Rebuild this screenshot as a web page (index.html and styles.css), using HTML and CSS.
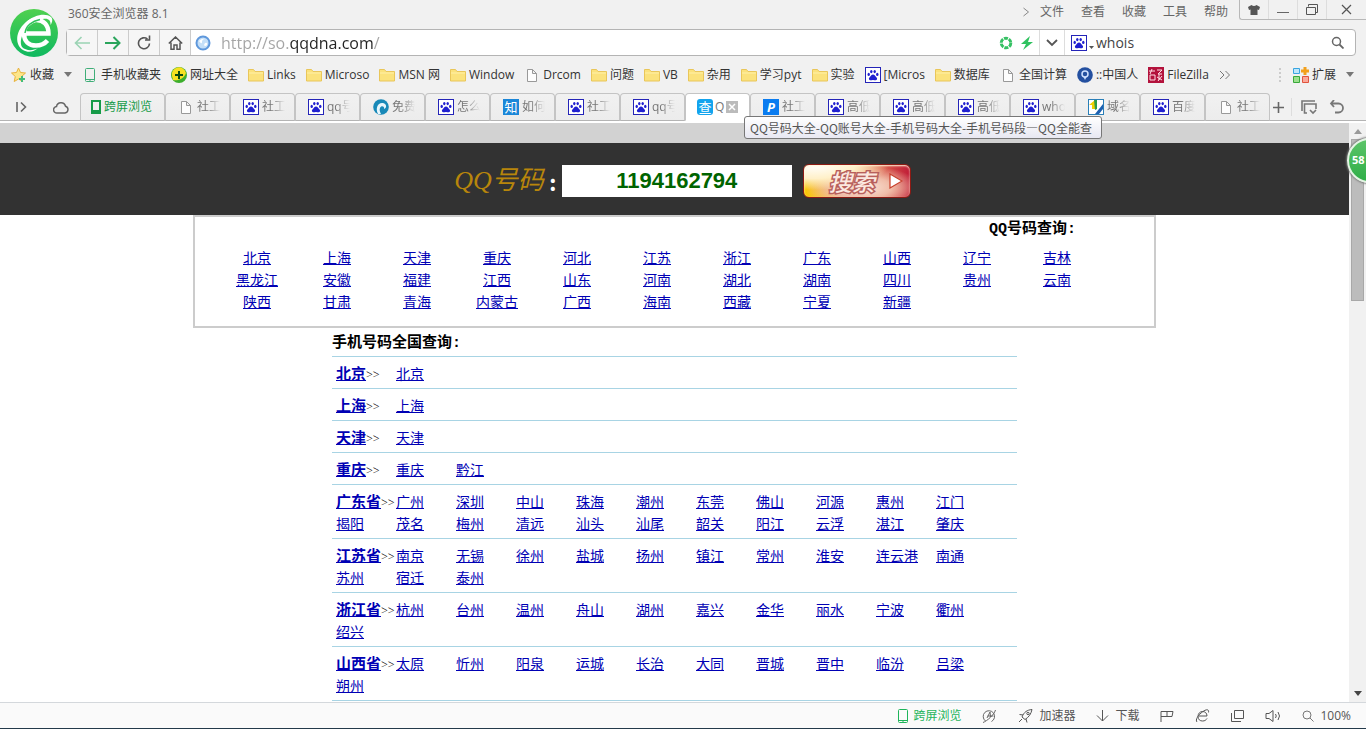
FILE: index.html
```html
<!DOCTYPE HTML>
<html lang="zh-CN">

<head>
	<meta charset="utf-8">
	<title>QQ号码大全</title>
	<link rel="stylesheet" href="styles.css">
</head>

<body>

	<!-- shared icons -->
	<svg class="sprite" aria-hidden="true">
		<symbol id="paw" viewBox="0 0 16 16">
			<rect x=".5" y=".5" width="15" height="15" fill="#fff" stroke="#2424b8"/>
			<g fill="#2020d0">
				<ellipse cx="3.700" cy="7.400" rx="1.200" ry="1.600"/>
				<ellipse cx="6.300" cy="4.600" rx="1.200" ry="1.700"/>
				<ellipse cx="9.700" cy="4.600" rx="1.200" ry="1.700"/>
				<ellipse cx="12.300" cy="7.400" rx="1.200" ry="1.600"/>
				<path d="M8 7.500c1.500 0 2 1.300 2.900 2.200 1 .9 1.400 1.700 1.100 2.600-.4 1.200-1.700 1.100-2.600.9a6 6 0 0 0-2.800 0c-.9.2-2.200.3-2.600-.9-.3-.9.100-1.700 1.100-2.600C6 8.800 6.500 7.500 8 7.500z"/>
			</g>
		</symbol>
		<symbol id="folder" viewBox="0 0 16 16">
			<path d="M.5 2.500h5l1.500 2h8.500v9.500H.5z" fill="#fbe27c" stroke="#e9c65a"/>
			<path d="M1 6h14" stroke="#fff0a8"/>
		</symbol>
		<symbol id="page" viewBox="0 0 16 16">
			<path d="M3.500 2.500h5l4 4v8h-9zM8.500 2.500v4h4" fill="#fdfdfd" stroke="#999"/>
		</symbol>
		<symbol id="phone" viewBox="0 0 16 16">
			<rect x="3.500" y="1.500" width="9" height="13" rx="1" fill="none" stroke="currentColor"/>
			<path d="M3 12.500h10M7 14h2" stroke="currentColor"/>
		</symbol>
	</svg>

	<header class="chrome">
		<div class="head">
			<svg class="logo" viewBox="0 0 48 48" aria-label="360">
				<defs>
					<linearGradient id="lg" x1="0" y1="0" x2="0" y2="1">
						<stop offset="0" stop-color="#4fd04f"/>
						<stop offset="1" stop-color="#0fb860"/>
					</linearGradient>
				</defs>
				<circle cx="24" cy="24" r="24" fill="url(#lg)"/>
				<path d="M16 24.500h22.500C38.500 16 33.500 11 26.500 11S14 16.500 14 24.500 19 36.500 26 36.500c5 0 8.500-1.500 11.500-5" fill="none" stroke="#fff" stroke-width="4.500"/>
				<path d="M13 41C5 36 5 23 15 14S36 4 41 8c2 2 1.500 5-.5 8 .5-6-4-8-12-4.500C15 17 8 30 12 38c4 4 11 4 16 1-4 4-10 5-15 2z" fill="#fff"/>
				<path d="M15 24C16 17 22 12 30 10.500" stroke="#2ec45a" fill="none" stroke-width="1.500"/>
			</svg>

			<div class="title-row">
				<span class="app-name">360安全浏览器 8.1</span>
				<nav class="menu">
					<svg width="8" height="12" viewBox="0 0 8 12"><path d="M1.500 2l5 4-5 4" fill="none" stroke="#888"/></svg>
					<a href="#">文件</a>
					<a href="#">查看</a>
					<a href="#">收藏</a>
					<a href="#">工具</a>
					<a href="#">帮助</a>
				</nav>
				<div class="window-buttons">
					<button aria-label="皮肤"><svg width="12" height="10" viewBox="0 0 12 10"><path d="M3.500 0Q6 2 8.500 0L12 2l-1 3-1.500-.5V10h-7V4.500L1 5 0 2z" fill="#555"/></svg></button>
					<button aria-label="最小化"><svg width="12" height="10" viewBox="0 0 12 10"><path d="M0 7.500h12" stroke="#666"/></svg></button>
					<button aria-label="还原"><svg width="12" height="11" viewBox="0 0 12 11"><path d="M2.500 2.500v-2h9v8h-2M.5 3.500h9v7h-9z" fill="none" stroke="#555"/></svg></button>
					<button aria-label="关闭"><svg width="11" height="11" viewBox="0 0 11 11"><path d="M1 1l9 9M10 1l-9 9" stroke="#555" stroke-width="1.200"/></svg></button>
				</div>
			</div>

			<div class="toolbar">
				<button class="nav-button" aria-label="后退"><svg width="16" height="14" viewBox="0 0 16 14"><path d="M16 7H2M7.500 1L1.500 7l6 6" fill="none" stroke="#9bd3b4" stroke-width="1.600"/></svg></button>
				<button class="nav-button" aria-label="前进"><svg width="16" height="14" viewBox="0 0 16 14"><path d="M0 7h14M8.500 1l6 6-6 6" fill="none" stroke="#2aa55c" stroke-width="2"/></svg></button>
				<button class="nav-button" aria-label="刷新"><svg width="14" height="15" viewBox="0 0 14 15"><path d="M12.500 8.500A5.500 5.500 0 1 1 10.500 4M8 5h4.500V.5" fill="none" stroke="#555" stroke-width="1.600"/></svg></button>
				<button class="nav-button" aria-label="主页"><svg width="15" height="14" viewBox="0 0 15 14"><path d="M.8 7.500L7.500 1l6.700 6.500M3 6.500v6.700h3V9h3v4.200h3V6.500" fill="none" stroke="#555" stroke-width="1.500"/></svg></button>
				<label class="address">
					<svg width="16" height="16" viewBox="0 0 16 16"><circle cx="8" cy="8" r="6.500" fill="#c4dff8" stroke="#5f98dc" stroke-width="2"/><path d="M4 6q3-3 6-2-3 0-3 3t-3-1zM10 8q3-1 2 2-2 2-3 0z" fill="#fff"/></svg>
					<input class="url" type="text" value="http://so.qqdna.com/" aria-label="地址">
				</label>
				<div class="flags">
					<svg width="14" height="14" viewBox="0 0 14 14"><circle cx="7" cy="7" r="4.800" fill="none" stroke="#35c163" stroke-width="3" stroke-dasharray="4 1"/></svg>
					<svg width="12" height="14" viewBox="0 0 12 14"><path d="M9 0L0 8h5l-3 6 10-8H7z" fill="#2fc25f"/></svg>
				</div>
				<button class="nav-button drop" aria-label="展开"><svg width="12" height="8" viewBox="0 0 12 8"><path d="M1 1l5 5 5-5" fill="none" stroke="#555" stroke-width="1.800"/></svg></button>
				<label class="quick-search">
					<svg width="16" height="16"><use href="#paw"/></svg>
					<svg class="tiny" width="5" height="3" viewBox="0 0 5 3"><path d="M0 0h5L2.500 3z" fill="#555"/></svg>
					<input type="text" value="whois" aria-label="搜索">
					<svg width="13" height="13" viewBox="0 0 13 13"><circle cx="5.500" cy="5.500" r="4" fill="none" stroke="#666" stroke-width="1.500"/><path d="M8.500 8.500l4 4" stroke="#666" stroke-width="1.800"/></svg>
				</label>
			</div>
		</div>

		<nav class="bookmarks">
			<a href="#" class="fav"><svg viewBox="0 0 16 16"><path d="M7.500 1l2 4.500 5 .5-4 3.500 1.200 5-4.200-2.500L3.200 14.500l1.100-5L.5 6l5-.5z" fill="#fde68a" stroke="#e8b23c"/><path d="M11 9v6M8 12h6" stroke="#45bd78" stroke-width="2"/></svg>收藏</a>
			<svg class="caret" viewBox="0 0 8 5"><path d="M0 0h8L4 5z" fill="#777"/></svg>
			<a href="#" class="green-icon"><svg><use href="#phone"/></svg>手机收藏夹</a>
			<a href="#"><svg viewBox="0 0 16 16"><circle cx="8" cy="8" r="8" fill="#3cae2c"/><path d="M1 9a7 7 0 0 1 14-3c-2 6-8 8-13 7z" fill="#f7e020"/><path d="M8 4v8M4 8h8" stroke="#0c4a10" stroke-width="2"/></svg>网址大全</a>
			<a href="#"><svg><use href="#folder"/></svg>Links</a>
			<a href="#"><svg><use href="#folder"/></svg>Microso</a>
			<a href="#"><svg><use href="#folder"/></svg>MSN 网</a>
			<a href="#"><svg><use href="#folder"/></svg>Window</a>
			<a href="#"><svg><use href="#page"/></svg>Drcom</a>
			<a href="#"><svg><use href="#folder"/></svg>问题</a>
			<a href="#"><svg><use href="#folder"/></svg>VB</a>
			<a href="#"><svg><use href="#folder"/></svg>杂用</a>
			<a href="#"><svg><use href="#folder"/></svg>学习pyt</a>
			<a href="#"><svg><use href="#folder"/></svg>实验</a>
			<a href="#"><svg><use href="#paw"/></svg>[Micros</a>
			<a href="#"><svg><use href="#folder"/></svg>数据库</a>
			<a href="#"><svg><use href="#page"/></svg>全国计算</a>
			<a href="#"><svg viewBox="0 0 16 16"><circle cx="8" cy="8" r="7.800" fill="#2450a0"/><circle cx="8" cy="7" r="3" fill="none" stroke="#cfe0ff" stroke-width="1.500"/><path d="M6.500 10L8 13l1.500-3z" fill="#cfe0ff"/></svg>::中国人</a>
			<a href="#"><svg viewBox="0 0 16 16"><rect width="16" height="16" fill="#b3123c"/><path d="M1 4h6M4 2l-2 5M2 8h5v5H2zM9 3h5l-4 4h4M11 7v6M9 10l5 3M14 9l-4 5" fill="none" stroke="#ffe0e6"/></svg>FileZilla</a>
			<svg class="more" viewBox="0 0 12 10"><path d="M1 1l4 4-4 4M6.500 1l4 4-4 4" fill="none" stroke="#777"/></svg>
			<span class="dots"></span>
			<a href="#" class="extend"><svg viewBox="0 0 16 16"><path d="M.5 1.500h6v5h-6z" fill="#bfe6fb" stroke="#39a5e0"/><path d="M.5 9.500h6v6h-6z" fill="#9ce08e" stroke="#3aa93c"/><path d="M9.500 9.500h6v6h-6z" fill="#fba89a" stroke="#e0543e"/><path d="M12 0v8M8 4h8" stroke="#f2a01c" stroke-width="3"/></svg>扩展</a>
			<svg class="caret" viewBox="0 0 8 5"><path d="M0 0h8L4 5z" fill="#777"/></svg>
		</nav>

		<nav class="tabs">
			<div class="tab-tools">
				<svg width="12" height="12" viewBox="0 0 12 12"><path d="M1 1v10M5 1.500L9.500 6 5 10.500" fill="none" stroke="#666" stroke-width="1.600"/></svg>
				<svg width="16" height="13" viewBox="0 0 16 13"><path d="M4 12a3.200 3.200 0 0 1-.5-6.400 4.600 4.600 0 0 1 9-.4A3.500 3.500 0 0 1 12 12z" fill="none" stroke="#666" stroke-width="1.500"/></svg>
			</div>
			<a href="#" class="tab cross"><svg viewBox="0 0 16 16"><path d="M4 2h8v12H4z" fill="none" stroke="#169b48" stroke-width="2"/><path d="M4 12h8" stroke="#169b48" stroke-width="2"/></svg><span>跨屏浏览</span></a>
			<a href="#" class="tab"><svg><use href="#page"/></svg><span>社工</span></a>
			<a href="#" class="tab"><svg><use href="#paw"/></svg><span>社工</span></a>
			<a href="#" class="tab"><svg><use href="#paw"/></svg><span>qq号</span></a>
			<a href="#" class="tab"><svg viewBox="0 0 16 16"><circle cx="8" cy="8" r="7.800" fill="#1889b8"/><path d="M5 15C2 9 5 3 10 4c4 1 4 5 1 6 1-3-3-4-4-1-.8 2 0 4 1 6z" fill="#e8f6fc"/></svg><span>免费</span></a>
			<a href="#" class="tab"><svg><use href="#paw"/></svg><span>怎么</span></a>
			<a href="#" class="tab"><b class="badge">知</b><span>如何</span></a>
			<a href="#" class="tab"><svg><use href="#paw"/></svg><span>社工</span></a>
			<a href="#" class="tab"><svg><use href="#paw"/></svg><span>qq号</span></a>
			<a href="#" class="tab active"><b class="badge round">查</b><span>Q</span><button aria-label="关闭标签"><svg viewBox="0 0 12 12"><path d="M3 3l6 6M9 3l-6 6" stroke="#fff" stroke-width="1.500"/></svg></button></a>
			<a href="#" class="tab"><b class="badge slanted">P</b><span>社工</span></a>
			<a href="#" class="tab"><svg><use href="#paw"/></svg><span>高低</span></a>
			<a href="#" class="tab"><svg><use href="#paw"/></svg><span>高低</span></a>
			<a href="#" class="tab"><svg><use href="#paw"/></svg><span>高低</span></a>
			<a href="#" class="tab"><svg><use href="#paw"/></svg><span>who</span></a>
			<a href="#" class="tab"><svg viewBox="0 0 16 16"><rect x=".5" y=".5" width="15" height="15" fill="#fff" stroke="#2a7fb8"/><path d="M1 6l6-5v9H4V6z" fill="#f0d000"/><path d="M6 1h3v9l-2 1z" fill="#2f9b4a"/><path d="M7 15l8-10v5l-4 5z" fill="#1c5fb0"/></svg><span>域名</span></a>
			<a href="#" class="tab"><svg><use href="#paw"/></svg><span>百度</span></a>
			<a href="#" class="tab"><svg><use href="#page"/></svg><span>社工</span></a>
			<div class="tab-actions">
				<button aria-label="新标签"><svg width="11" height="11" viewBox="0 0 11 11"><path d="M5.500 0v11M0 5.500h11" stroke="#666" stroke-width="1.600"/></svg></button>
				<button aria-label="标签列表"><svg width="17" height="15" viewBox="0 0 17 15"><path d="M2 11V1h13M7 13H4.500V4H16v5M10 10l3 3 3-3" fill="none" stroke="#777" stroke-width="1.600"/></svg></button>
				<button aria-label="撤销"><svg width="16" height="14" viewBox="0 0 16 14"><path d="M5 0L2 3.500 5 7M2 3.500h7.500a4.500 4.500 0 0 1 0 9H6" fill="none" stroke="#777" stroke-width="1.800"/></svg></button>
			</div>
		</nav>
	</header>

	<div class="tooltip" role="tooltip">QQ号码大全-QQ账号大全-手机号码大全-手机号码段—QQ全能查</div>

	<div class="viewport">
		<main class="page">
			<div class="strip"></div>
			<form class="search">
				<label for="qq"><i>QQ号码</i></label>
				<b>:</b>
				<input id="qq" type="text" value="1194162794">
				<button type="button"><span>搜索</span><svg width="14" height="16" viewBox="0 0 14 16"><path d="M1 1l12 7-12 7z" fill="#fff" stroke="#c8402c" stroke-width="1.200"/></svg></button>
			</form>

			<section class="provinces">
				<h2>QQ号码查询:</h2>
				<ul>
					<li><a href="#">北京</a></li>
					<li><a href="#">上海</a></li>
					<li><a href="#">天津</a></li>
					<li><a href="#">重庆</a></li>
					<li><a href="#">河北</a></li>
					<li><a href="#">江苏</a></li>
					<li><a href="#">浙江</a></li>
					<li><a href="#">广东</a></li>
					<li><a href="#">山西</a></li>
					<li><a href="#">辽宁</a></li>
					<li><a href="#">吉林</a></li>
					<li><a href="#">黑龙江</a></li>
					<li><a href="#">安徽</a></li>
					<li><a href="#">福建</a></li>
					<li><a href="#">江西</a></li>
					<li><a href="#">山东</a></li>
					<li><a href="#">河南</a></li>
					<li><a href="#">湖北</a></li>
					<li><a href="#">湖南</a></li>
					<li><a href="#">四川</a></li>
					<li><a href="#">贵州</a></li>
					<li><a href="#">云南</a></li>
					<li><a href="#">陕西</a></li>
					<li><a href="#">甘肃</a></li>
					<li><a href="#">青海</a></li>
					<li><a href="#">内蒙古</a></li>
					<li><a href="#">广西</a></li>
					<li><a href="#">海南</a></li>
					<li><a href="#">西藏</a></li>
					<li><a href="#">宁夏</a></li>
					<li><a href="#">新疆</a></li>
				</ul>
			</section>

			<section class="cities">
				<h2>手机号码全国查询:</h2>
				<ul>
					<li><a href="#"><strong>北京</strong></a>&gt;&gt;</li>
					<li><a href="#">北京</a></li>
				</ul>
				<ul>
					<li><a href="#"><strong>上海</strong></a>&gt;&gt;</li>
					<li><a href="#">上海</a></li>
				</ul>
				<ul>
					<li><a href="#"><strong>天津</strong></a>&gt;&gt;</li>
					<li><a href="#">天津</a></li>
				</ul>
				<ul>
					<li><a href="#"><strong>重庆</strong></a>&gt;&gt;</li>
					<li><a href="#">重庆</a></li>
					<li><a href="#">黔江</a></li>
				</ul>
				<ul>
					<li><a href="#"><strong>广东省</strong></a>&gt;&gt;</li>
					<li><a href="#">广州</a></li>
					<li><a href="#">深圳</a></li>
					<li><a href="#">中山</a></li>
					<li><a href="#">珠海</a></li>
					<li><a href="#">潮州</a></li>
					<li><a href="#">东莞</a></li>
					<li><a href="#">佛山</a></li>
					<li><a href="#">河源</a></li>
					<li><a href="#">惠州</a></li>
					<li><a href="#">江门</a></li>
					<li><a href="#">揭阳</a></li>
					<li><a href="#">茂名</a></li>
					<li><a href="#">梅州</a></li>
					<li><a href="#">清远</a></li>
					<li><a href="#">汕头</a></li>
					<li><a href="#">汕尾</a></li>
					<li><a href="#">韶关</a></li>
					<li><a href="#">阳江</a></li>
					<li><a href="#">云浮</a></li>
					<li><a href="#">湛江</a></li>
					<li><a href="#">肇庆</a></li>
				</ul>
				<ul>
					<li><a href="#"><strong>江苏省</strong></a>&gt;&gt;</li>
					<li><a href="#">南京</a></li>
					<li><a href="#">无锡</a></li>
					<li><a href="#">徐州</a></li>
					<li><a href="#">盐城</a></li>
					<li><a href="#">扬州</a></li>
					<li><a href="#">镇江</a></li>
					<li><a href="#">常州</a></li>
					<li><a href="#">淮安</a></li>
					<li><a href="#">连云港</a></li>
					<li><a href="#">南通</a></li>
					<li><a href="#">苏州</a></li>
					<li><a href="#">宿迁</a></li>
					<li><a href="#">泰州</a></li>
				</ul>
				<ul>
					<li><a href="#"><strong>浙江省</strong></a>&gt;&gt;</li>
					<li><a href="#">杭州</a></li>
					<li><a href="#">台州</a></li>
					<li><a href="#">温州</a></li>
					<li><a href="#">舟山</a></li>
					<li><a href="#">湖州</a></li>
					<li><a href="#">嘉兴</a></li>
					<li><a href="#">金华</a></li>
					<li><a href="#">丽水</a></li>
					<li><a href="#">宁波</a></li>
					<li><a href="#">衢州</a></li>
					<li><a href="#">绍兴</a></li>
				</ul>
				<ul>
					<li><a href="#"><strong>山西省</strong></a>&gt;&gt;</li>
					<li><a href="#">太原</a></li>
					<li><a href="#">忻州</a></li>
					<li><a href="#">阳泉</a></li>
					<li><a href="#">运城</a></li>
					<li><a href="#">长治</a></li>
					<li><a href="#">大同</a></li>
					<li><a href="#">晋城</a></li>
					<li><a href="#">晋中</a></li>
					<li><a href="#">临汾</a></li>
					<li><a href="#">吕梁</a></li>
					<li><a href="#">朔州</a></li>
				</ul>
			</section>
		</main>

		<div class="scrollbar">
			<svg viewBox="0 0 8 5"><path d="M0 5h8L4 0z" fill="#999"/></svg>
			<div class="thumb"></div>
			<svg viewBox="0 0 8 5"><path d="M0 0h8L4 5z" fill="#444"/></svg>
		</div>
	</div>

	<div class="speed-ball">58</div>

	<footer class="status">
		<a href="#" class="green"><svg width="16" height="16"><use href="#phone"/></svg>跨屏浏览</a>
		<a href="#"><svg width="15" height="14" viewBox="0 0 15 14"><path d="M3.500 12a5.700 5.700 0 1 1 6 .5M1 13.500C5 12 12 6 13.500 1M5 9l3-6 .5 5M5.500 7h6" fill="none" stroke="#666"/></svg></a>
		<a href="#"><svg width="15" height="14" viewBox="0 0 15 14"><path d="M4 8C6 3 9 1 14 .5 13 5 11 8 7 10.500zM5 6L1.500 5.500M8 10l1 3.500M4 10l-3 3" fill="none" stroke="#555"/><circle cx="10" cy="4.500" r="1.200" fill="none" stroke="#555"/></svg>加速器</a>
		<a href="#"><svg width="13" height="12" viewBox="0 0 13 12"><path d="M6.500 0v11M1 5.500l5.500 5.500L12 5.500" fill="none" stroke="#555"/></svg>下载</a>
		<a href="#"><svg width="14" height="12" viewBox="0 0 14 12"><path d="M1 12V1.500h12l-1 5H1M7 1.500v5" fill="none" stroke="#555"/></svg></a>
		<a href="#"><svg width="15" height="14" viewBox="0 0 15 14"><path d="M4 7h8c0-3-2-4.500-4.500-4.500S3 4.500 3 7.500 5 12 7.500 12s3.500-1 4.500-2.500M2 13C0 11 3 6 8 2.500s6-1 5.500 1" fill="none" stroke="#555"/></svg></a>
		<a href="#"><svg width="13" height="12" viewBox="0 0 13 12"><path d="M3.500.5h9v8h-9zM.5 3v8.500H10" fill="none" stroke="#555"/></svg></a>
		<a href="#"><svg width="16" height="12" viewBox="0 0 16 12"><path d="M1 3.500h3L8 .5v11L4 8.500H1zM10.500 4q1.500 2 0 4M13 2q3 4 0 8" fill="none" stroke="#555"/></svg></a>
		<a href="#"><svg width="12" height="12" viewBox="0 0 12 12"><circle cx="5" cy="5" r="4" fill="none" stroke="#777"/><path d="M8 8l3.500 3.500" stroke="#777"/></svg>100%</a>
	</footer>

</body>

</html>
```
FILE: styles.css
```css
* {
	box-sizing: border-box;
}

body {
	margin: 0;
	height: 100vh;
	display: flex;
	flex-direction: column;
	overflow: hidden;
	position: relative;
	background: #fff;
	font: 12px/16px "Open Sans", "Noto Sans CJK SC", sans-serif;
	color: #444;
}

a {
	color: inherit;
	text-decoration: none;
}

button {
	border: 0;
	padding: 0;
	background: none;
	font: inherit;
	display: flex;
	align-items: center;
	justify-content: center;
}

input {
	border: 0;
	padding: 0;
	outline: 0;
	min-width: 0;
	background: none;
	font: inherit;
}

svg {
	flex: none;
}

ul {
	list-style: none;
	margin: 0;
	padding: 0;
}

.sprite {
	position: absolute;
	width: 0;
	height: 0;
}

/* browser window */
.chrome {
	background: #f1f1f1;
	flex: none;
}

.head {
	display: grid;
	grid-template-columns: 56px 1fr;
	grid-template-rows: 29px 27px;
	padding-left: 10px;
}

.logo {
	width: 48px;
	height: 48px;
	grid-row: 1 / 3;
	align-self: center;
	margin-top: 10px;
}

.title-row {
	display: flex;
	align-items: flex-start;
}

.app-name {
	flex: 1;
	padding: 6px 2px;
	color: #666;
}

.menu {
	display: flex;
	align-items: center;
	gap: 17px;
	padding: 4px 11px 0 0;
	color: #666;
}

.menu svg {
	margin-right: -7px;
}

.window-buttons {
	display: flex;
	height: 20px;
	border: 1px solid #b8b8b8;
	border-width: 0 0 1px 1px;
	border-radius: 0 0 0 3px;
}

.window-buttons button {
	width: 29px;
	border-right: 1px solid #ddd;
}

.window-buttons button:last-child {
	width: 39px;
	border: 0;
}

.toolbar {
	display: flex;
	margin-right: 10px;
	background: #fff;
	border: 1px solid #b4b4b4;
	border-radius: 4px;
}

.nav-button {
	width: 31px;
	background: #f6f6f6;
	border-right: 1px solid #ccc;
}

.drop {
	width: 26px;
	background: #fff;
	border-left: 1px solid #ddd;
	border-right-color: #ddd;
}

.address {
	flex: 1;
	display: flex;
	align-items: center;
	gap: 10px;
	padding-left: 4px;
	font-size: 16px;
}

/* the host is darker than the rest of the address */
.url {
	flex: 1;
	color: transparent;
	background: linear-gradient(to right, #a4a4a4 68px, #222 68px, #222 152px, #a4a4a4 152px);
	-webkit-background-clip: text;
	background-clip: text;
}

.flags {
	display: flex;
	align-items: center;
	gap: 8px;
	padding-right: 6px;
}

.quick-search {
	width: 290px;
	display: flex;
	align-items: center;
	padding: 0 11px 0 6px;
	font-size: 14px;
}

.quick-search input {
	flex: 1;
	color: #444;
}

.tiny {
	margin: 10px 2px 0;
}

.bookmarks {
	display: flex;
	align-items: center;
	gap: 10px;
	height: 37px;
	padding: 0 12px 0 11px;
	white-space: nowrap;
	color: #333;
}

.bookmarks a {
	display: flex;
	align-items: center;
	gap: 3px;
}

.bookmarks a svg {
	width: 16px;
	height: 16px;
}

.bookmarks .caret {
	width: 8px;
	height: 5px;
}

.bookmarks .more {
	width: 12px;
	height: 10px;
}

.bookmarks .green-icon svg {
	color: #3fae78;
}

.dots {
	height: 14px;
	border-left: 2px dotted #ccc;
	margin-left: auto;
	margin-right: 2px;
}

.tabs {
	display: flex;
	height: 30px;
	border-bottom: 2px solid #fff;
	box-shadow: inset 0 -1px #b4b4b4;
}

.tab-tools {
	width: 80px;
	display: flex;
	align-items: center;
	justify-content: space-between;
	padding: 0 11px 0 16px;
}

.tab {
	flex: 0 1 65px;
	min-width: 0;
	display: flex;
	align-items: center;
	gap: 3px;
	padding-left: 12px;
	border: 1px solid #c4c4c4;
	border-bottom-color: #b4b4b4;
	border-radius: 4px 4px 0 0;
	background: linear-gradient(#f1f1f1, #ececec);
	white-space: nowrap;
	color: #777;
}

.tab > svg {
	width: 16px;
	height: 16px;
}

/* long titles fade out */
.tab span {
	-webkit-mask-image: linear-gradient(to right, #000 9px, transparent 23px);
	mask-image: linear-gradient(to right, #000 9px, transparent 23px);
}

.tab.cross {
	flex: none;
	width: 85px;
	padding-left: 7px;
	gap: 0;
	color: #169b48;
}

.tab.cross span,
.tab.active span {
	-webkit-mask-image: none;
	mask-image: none;
}

.tab.active {
	background: #fff;
	border-bottom-color: #fff;
	gap: 2px;
	padding-left: 11px;
}

.active button {
	width: 12px;
	height: 12px;
	background: #bbb;
}

.badge {
	width: 16px;
	height: 16px;
	background: #1a86d8;
	color: #fff;
	font-size: 13px;
	text-align: center;
	font-weight: normal;
}

.round {
	background: #12a4ee;
	border-radius: 3px;
}

.slanted {
	background: #0a7cf0;
	font-weight: bold;
	font-style: italic;
}

.tab-actions {
	display: flex;
	align-items: center;
	gap: 12px;
	padding-left: 3px;
}

.tab-actions button:first-child {
	height: 18px;
	padding-right: 7px;
	border-right: 1px solid #ddd;
	margin-right: -4px;
}

.tooltip {
	position: absolute;
	left: 744px;
	top: 116px;
	z-index: 2;
	padding: 2px 9px 2px 5px;
	background: linear-gradient(#fff, #e8e8f2);
	border: 1px solid #777;
	border-radius: 3px;
	font-family: "Noto Sans CJK SC", sans-serif;
	line-height: 17px;
	white-space: nowrap;
	color: #555;
}

/* web page */
.viewport {
	flex: 1;
	min-height: 0;
	display: flex;
}

.page {
	flex: 1;
	overflow: hidden;
	font: 14px/22px "Noto Sans CJK SC", sans-serif;
	color: #000;
}

.strip {
	height: 20px;
	background: #d2d2d2;
}

.search {
	height: 72px;
	display: flex;
	align-items: center;
	justify-content: center;
	padding: 4px 0 0 16px;
	background: #323232;
}

.search label {
	font: 26px/32px "Liberation Serif", "Noto Sans CJK SC", serif;
	color: #b8860b;
}

.search b {
	width: 18px;
	text-align: center;
	font-size: 22px;
	color: #fff;
}

.search input {
	width: 230px;
	height: 32px;
	background: #fff;
	color: #006400;
	text-align: center;
	font: bold 22px "Liberation Sans", sans-serif;
}

.search button {
	width: 108px;
	height: 34px;
	margin-left: 11px;
	gap: 14px;
	padding-left: 18px;
	border: 1px solid #8c1a14;
	border-radius: 6px;
	background: radial-gradient(ellipse at 10% 0, #fff 0, #fff0c8 30%, transparent 55%), radial-gradient(ellipse at 55% 70%, #fbe9dc 0, #f0bca8 35%, transparent 70%), linear-gradient(to right, #fac800, #f6b860 35%, #d85848 75%, #c01c38);
	box-shadow: inset 0 1px 2px #fff6d8;
}

.search button span {
	font-size: 23px;
	font-weight: 500;
	font-style: italic;
	color: #fbe8e0;
	-webkit-text-stroke: 3px #b8605c;
	paint-order: stroke fill;
}

.page h2 {
	margin: 0;
	font: bold 15px/22px "Liberation Mono", "Noto Sans CJK SC", monospace;
}

.page li a {
	color: #0000b4;
	text-decoration: underline;
	text-decoration-thickness: 1px;
	text-underline-offset: 1px;
}

.provinces {
	max-width: 963px;
	margin: 0 auto;
	padding: 2px 0 14px 22px;
	border: 2px solid #ccc;
}

.provinces h2 {
	text-align: right;
	padding: 0 78px 5px 0;
}

.provinces ul {
	display: grid;
	grid-template-columns: repeat(11, 80px);
	text-align: center;
}

.cities {
	max-width: 685px;
	margin: 0 auto;
}

.cities h2 {
	padding: 5px 0 1px;
	border-bottom: 1px solid #a8d4e4;
}

.cities ul {
	display: flex;
	flex-wrap: wrap;
	padding: 5px 0 4px 4px;
	border-bottom: 1px solid #a8d4e4;
}

.cities li {
	width: 60px;
	height: 22px;
	white-space: nowrap;
	font-family: "Open Sans", "Noto Sans CJK SC", sans-serif;
	font-weight: 300;
	font-size: 12px;
}

.cities a {
	font: 14px/22px "Noto Sans CJK SC", sans-serif;
}

.cities strong {
	font-size: 15px;
}

.scrollbar {
	width: 17px;
	display: flex;
	flex-direction: column;
	align-items: center;
	padding: 6px 0;
	background: #f1f1f1;
}

.scrollbar svg {
	width: 8px;
	height: 5px;
}

.thumb {
	width: 13px;
	height: 162px;
	margin: 5px 0 auto;
	background: #bcbcbc;
	border: 1px solid #a8a8a8;
}

.speed-ball {
	position: absolute;
	top: 138px;
	right: -26px;
	width: 45px;
	height: 45px;
	padding-left: 3px;
	border: 2px solid #e4f4e4;
	border-radius: 50%;
	background: linear-gradient(#5cc468, #2fae48);
	box-shadow: 0 0 2px 1px #777;
	color: #fff;
	font-size: 11px;
	font-weight: bold;
	line-height: 40px;
}

.status {
	flex: none;
	height: 27px;
	display: flex;
	align-items: center;
	justify-content: flex-end;
	gap: 21px;
	padding-right: 15px;
	background: #fafafa;
	border-top: 1px solid #d4d8dc;
	border-bottom: 1px solid #23394a;
	color: #555;
}

.status a {
	display: flex;
	align-items: center;
	gap: 6px;
}

.status .green {
	color: #1eb45a;
	gap: 2px;
}
```
